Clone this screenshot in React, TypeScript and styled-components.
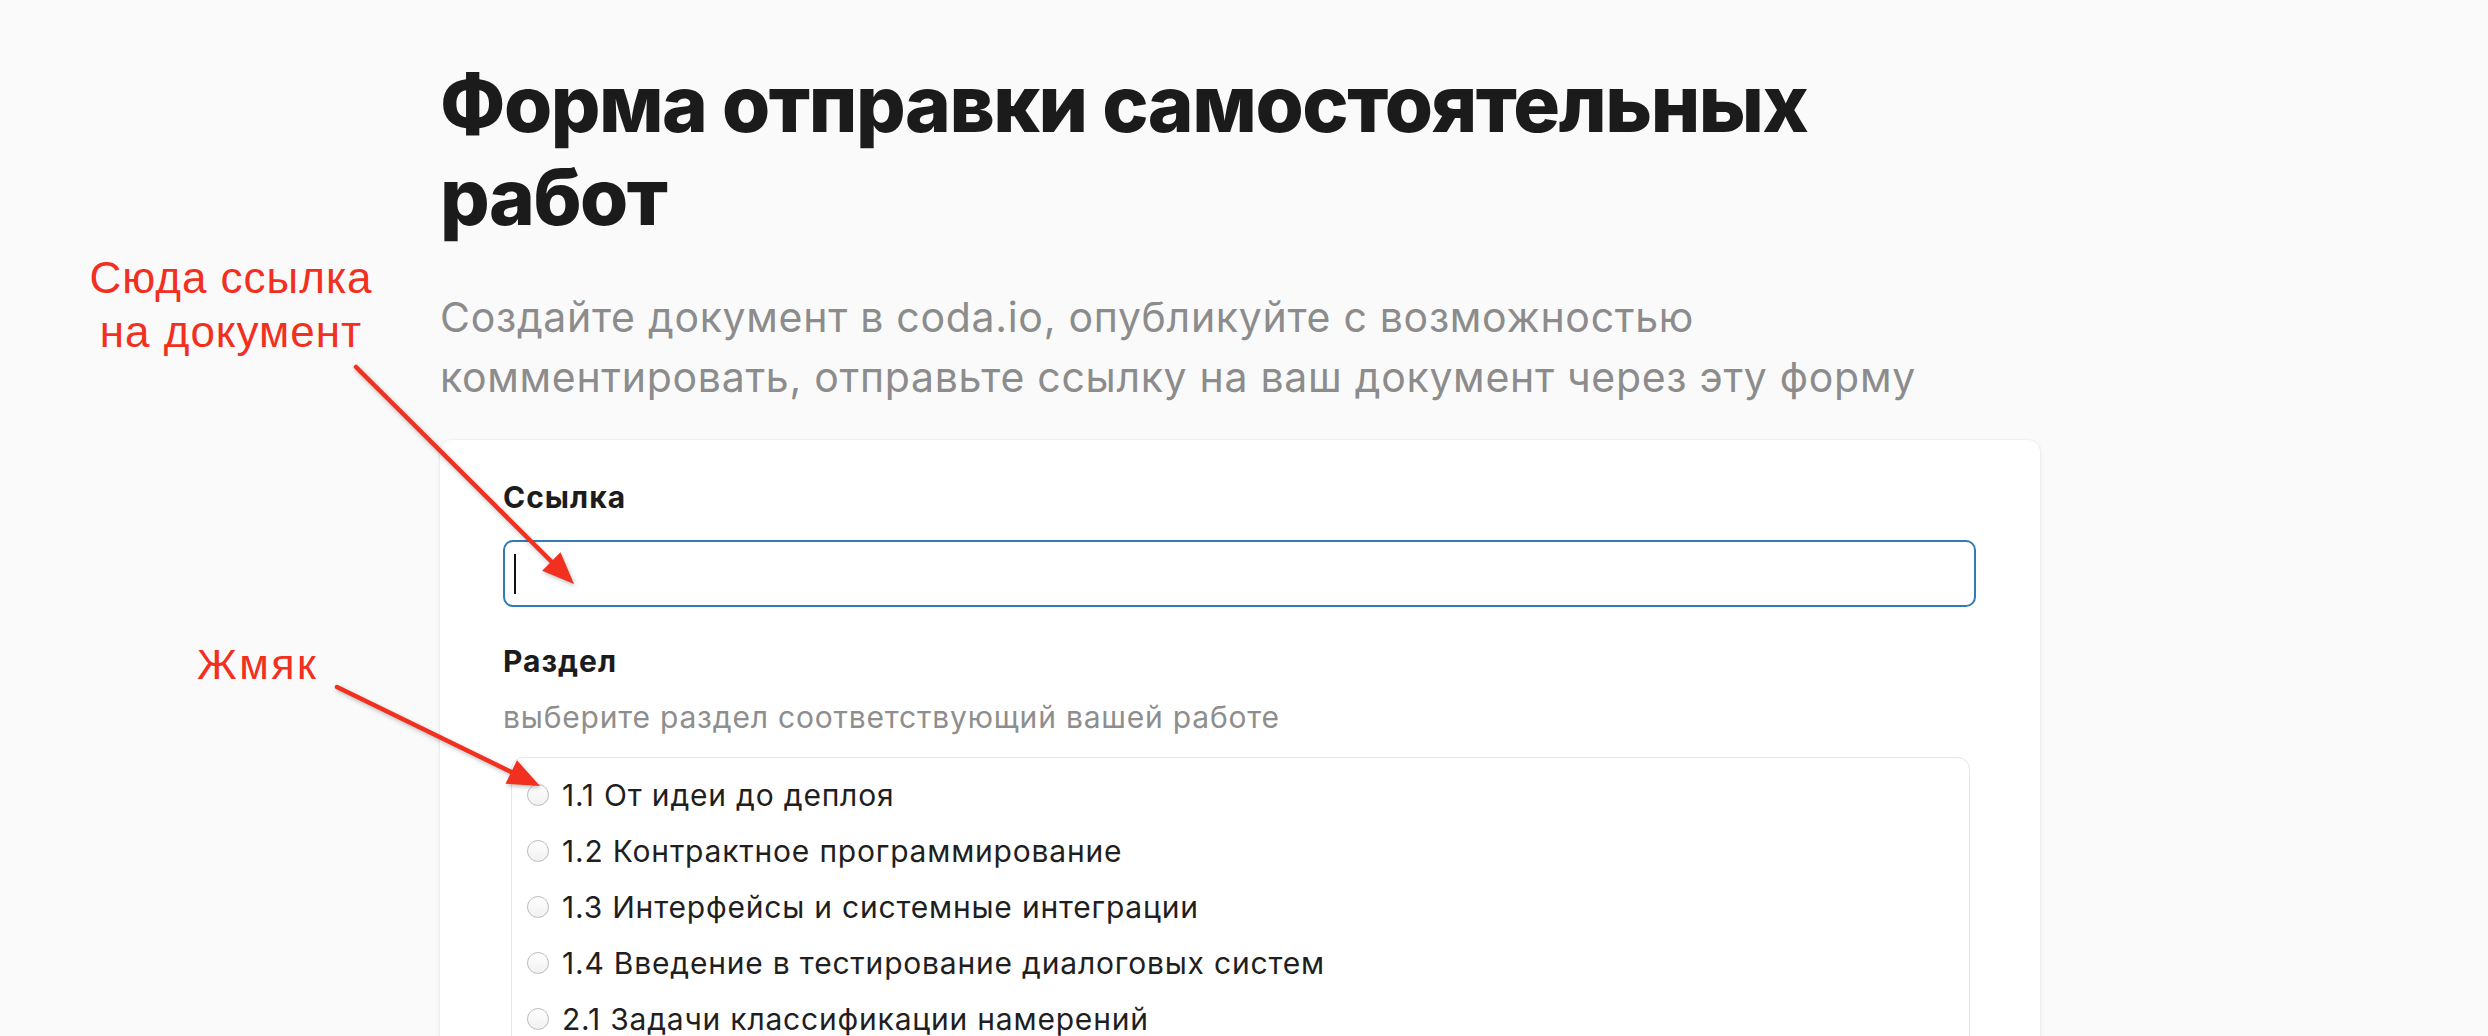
import React from 'react'
import styled, { createGlobalStyle } from 'styled-components'

const GlobalStyle = createGlobalStyle`
  html, body {
    margin: 0;
    padding: 0;
    background: #fafafa;
    font-family: Inter, "Noto Sans", "Liberation Sans", sans-serif;
    color: #1e1e1e;
  }
`;

const Page = styled.div`
  position: relative;
  height: 1036px;
  overflow: hidden;
`;

const Main = styled.main`
  width: 1600px;
  margin-left: 440px;
  padding-top: 57px;
  display: flex;
  flex-direction: column;
`;

const Title = styled.h1`
  margin: 0;
  font-size: 78px;
  line-height: 93px;
  font-weight: 800;
  letter-spacing: -1.5px;
  color: #1b1b1b;
`;

const Subtitle = styled.p`
  margin: 44px 0 0;
  font-size: 41px;
  line-height: 60px;
  font-weight: 400;
  letter-spacing: 0.7px;
  color: #8c8c8c;
`;

const Card = styled.form`
  margin-top: 33px;
  background: #fff;
  border-radius: 12px;
  box-shadow: 0 1px 4px rgba(0, 0, 0, 0.08), 0 0 0 1px rgba(0, 0, 0, 0.02);
  padding: 37px 64px 40px 63px;
  display: flex;
  flex-direction: column;
`;

const Label = styled.div<{ $gap?: number }>`
  font-size: 30px;
  line-height: 40px;
  font-weight: 700;
  letter-spacing: 1px;
  color: #1c1c1c;
  margin-top: ${p => p.$gap ?? 0}px;
`;

const Hint = styled.div`
  margin-top: 16px;
  font-size: 30px;
  line-height: 40px;
  letter-spacing: 0.8px;
  color: #8e8e8e;
`;

const InputBox = styled.div`
  margin-top: 23px;
  height: 67px;
  box-sizing: border-box;
  border: 2px solid #2f7db6;
  border-radius: 10px;
  display: flex;
  align-items: center;
  padding-left: 9px;
`;

const Caret = styled.span`
  width: 2px;
  height: 40px;
  background: #111;
`;

const RadioList = styled.div`
  margin: 20px 6px 0 8px;
  border: 1px solid #e6e6e6;
  border-radius: 12px;
  padding: 9px 15px 0;
  display: flex;
  flex-direction: column;
`;

const RadioRow = styled.label`
  height: 56px;
  display: flex;
  align-items: center;
  gap: 13px;
  font-size: 30px;
  letter-spacing: 0.8px;
  color: #1f1f1f;
`;

const RadioCircle = styled.span`
  width: 22px;
  height: 22px;
  box-sizing: border-box;
  border-radius: 50%;
  border: 1px solid #bcbcbc;
  background: linear-gradient(#fff, #f1f1f1);
  flex-shrink: 0;
`;

const Note = styled.div<{ $x: number; $y: number; $size: number; $lh: number; $ls: number; $center?: boolean }>`
  position: absolute;
  left: ${p => p.$x}px;
  top: ${p => p.$y}px;
  transform: ${p => (p.$center ? 'translateX(-50%)' : 'none')};
  font-family: "Liberation Sans", Arial, sans-serif;
  font-size: ${p => p.$size}px;
  line-height: ${p => p.$lh}px;
  letter-spacing: ${p => p.$ls}px;
  color: #f2301f;
  text-align: center;
  white-space: nowrap;
`;

const Arrows = styled.svg`
  position: absolute;
  inset: 0;
  pointer-events: none;
  filter: drop-shadow(1px 2px 2px rgba(0, 0, 0, 0.25));
`;

const sections = [
  '1.1 От идеи до деплоя',
  '1.2 Контрактное программирование',
  '1.3 Интерфейсы и системные интеграции',
  '1.4 Введение в тестирование диалоговых систем',
  '2.1 Задачи классификации намерений',
];

type Pt = [number, number];

const Arrow: React.FC<{ from: Pt; to: Pt }> = ({ from, to }) => {
  const dx = to[0] - from[0];
  const dy = to[1] - from[1];
  const len = Math.hypot(dx, dy);
  const ux = dx / len;
  const uy = dy / len;
  const bx = to[0] - ux * 32;
  const by = to[1] - uy * 32;
  const w = 13;
  const pts = `${to[0]},${to[1]} ${bx - uy * w},${by + ux * w} ${bx + uy * w},${by - ux * w}`;
  return (
    <g>
      <line x1={from[0]} y1={from[1]} x2={bx + ux * 4} y2={by + uy * 4} stroke="#f2301f" strokeWidth={4.5} strokeLinecap="round" />
      <polygon points={pts} fill="#f2301f" />
    </g>
  );
};

export default function App() {
  return (
    <Page>
      <GlobalStyle />
      <Main>
        <Title>
          Форма отправки самостоятельных
          <br />
          работ
        </Title>
        <Subtitle>
          Создайте документ в coda.io, опубликуйте с возможностью
          <br />
          комментировать, отправьте ссылку на ваш документ через эту форму
        </Subtitle>
        <Card>
          <Label>Ссылка</Label>
          <InputBox>
            <Caret />
          </InputBox>
          <Label $gap={34}>Раздел</Label>
          <Hint>выберите раздел соответствующий вашей работе</Hint>
          <RadioList>
            {sections.map(s => (
              <RadioRow key={s}>
                <RadioCircle />
                {s}
              </RadioRow>
            ))}
          </RadioList>
        </Card>
      </Main>

      <Note $x={231} $y={251} $size={44} $lh={54} $ls={1} $center>
        Сюда ссылка
        <br />
        на документ
      </Note>
      <Note $x={197} $y={639} $size={43} $lh={50} $ls={2.5}>
        Жмяк
      </Note>

      <Arrows width={2488} height={1036} viewBox="0 0 2488 1036">
        <Arrow from={[356, 367]} to={[574, 584]} />
        <Arrow from={[337, 687]} to={[540, 786]} />
      </Arrows>
    </Page>
  );
}
